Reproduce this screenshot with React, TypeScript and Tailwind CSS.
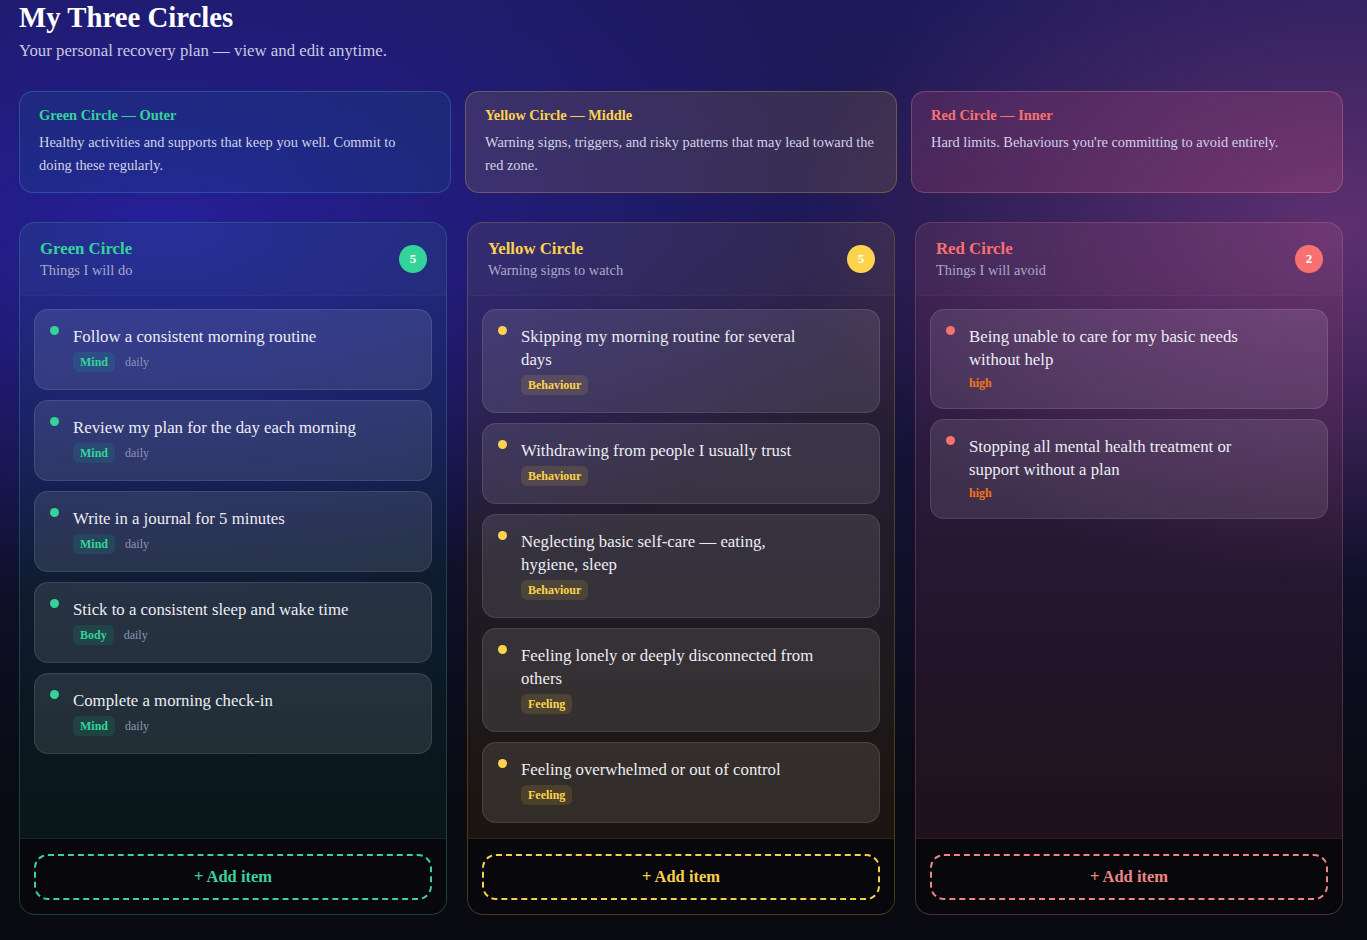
import React from 'react';

type Item = { text: string; tag?: string; freq?: string; level?: string };

type Circle = {
  key: string;
  title: string;
  subtitle: string;
  items: Item[];
  colBg: string;
  colBorder: string;
  titleColor: string;
  badgeBg: string;
  dot: string;
  tagCls: string;
  footBorder: string;
  addCls: string;
};

const circles: Circle[] = [
  {
    key: 'green',
    title: 'Green Circle',
    subtitle: 'Things I will do',
    items: [
      { text: 'Follow a consistent morning routine', tag: 'Mind', freq: 'daily' },
      { text: 'Review my plan for the day each morning', tag: 'Mind', freq: 'daily' },
      { text: 'Write in a journal for 5 minutes', tag: 'Mind', freq: 'daily' },
      { text: 'Stick to a consistent sleep and wake time', tag: 'Body', freq: 'daily' },
      { text: 'Complete a morning check-in', tag: 'Mind', freq: 'daily' },
    ],
    colBg: 'bg-emerald-400/[0.06]',
    colBorder: 'border-emerald-300/20',
    titleColor: 'text-[#34d399]',
    badgeBg: 'bg-[#34d399]',
    dot: 'bg-[#34d399]',
    tagCls: 'text-[#34d399] bg-emerald-400/[0.12]',
    footBorder: 'border-emerald-300/15',
    addCls: 'border-[#3fcf9c] text-[#3fcf9c]',
  },
  {
    key: 'yellow',
    title: 'Yellow Circle',
    subtitle: 'Warning signs to watch',
    items: [
      { text: 'Skipping my morning routine for several days', tag: 'Behaviour' },
      { text: 'Withdrawing from people I usually trust', tag: 'Behaviour' },
      { text: 'Neglecting basic self-care — eating, hygiene, sleep', tag: 'Behaviour' },
      { text: 'Feeling lonely or deeply disconnected from others', tag: 'Feeling' },
      { text: 'Feeling overwhelmed or out of control', tag: 'Feeling' },
    ],
    colBg: 'bg-amber-400/[0.07]',
    colBorder: 'border-amber-300/20',
    titleColor: 'text-[#fcd34d]',
    badgeBg: 'bg-[#fcd34d]',
    dot: 'bg-[#fcd34d]',
    tagCls: 'text-[#fcd34d] bg-amber-300/[0.12]',
    footBorder: 'border-amber-300/15',
    addCls: 'border-[#f7cf4e] text-[#f7cf4e]',
  },
  {
    key: 'red',
    title: 'Red Circle',
    subtitle: 'Things I will avoid',
    items: [
      { text: 'Being unable to care for my basic needs without help', level: 'high' },
      { text: 'Stopping all mental health treatment or support without a plan', level: 'high' },
    ],
    colBg: 'bg-rose-400/[0.09]',
    colBorder: 'border-rose-300/20',
    titleColor: 'text-[#f87171]',
    badgeBg: 'bg-[#f87171]',
    dot: 'bg-[#f87171]',
    tagCls: '',
    footBorder: 'border-rose-300/15',
    addCls: 'border-[#ee8585] text-[#ee8585]',
  },
];

const intro = [
  {
    title: 'Green Circle — Outer',
    text: 'Healthy activities and supports that keep you well. Commit to doing these regularly.',
    cls: 'bg-emerald-400/[0.07] border-sky-300/20',
    titleCls: 'text-[#34d399]',
  },
  {
    title: 'Yellow Circle — Middle',
    text: 'Warning signs, triggers, and risky patterns that may lead toward the red zone.',
    cls: 'bg-amber-300/[0.12] border-amber-300/25',
    titleCls: 'text-[#fcd34d]',
  },
  {
    title: 'Red Circle — Inner',
    text: "Hard limits. Behaviours you're committing to avoid entirely.",
    cls: 'bg-rose-400/[0.15] border-rose-300/25',
    titleCls: 'text-[#f87171]',
  },
];

function ItemCard({ item, c }: { item: Item; c: Circle }) {
  return (
    <div className="rounded-[14px] border border-white/10 bg-white/[0.1] pl-[15px] pr-4 pt-[15px] pb-[17px] flex items-start gap-[14px]">
      <span className={`mt-[1px] w-[9px] h-[9px] rounded-full shrink-0 ${c.dot}`} />
      <div className="max-w-[300px]">
        <p className="text-[16.8px] leading-[23px] text-[#ececf4]">{item.text}</p>
        <div className="mt-[4px] flex items-center gap-[10px]">
          {item.tag && (
            <span className={`rounded-md px-[7px] py-[3px] text-[12px] leading-[14px] font-bold ${c.tagCls}`}>
              {item.tag}
            </span>
          )}
          {item.freq && <span className="text-[12px] leading-[20px] text-[#9093b3]">{item.freq}</span>}
          {item.level && (
            <span className="text-[12px] leading-[16px] font-bold text-[#f97316]">{item.level}</span>
          )}
        </div>
      </div>
    </div>
  );
}

function Column({ c }: { c: Circle }) {
  return (
    <div className={`flex flex-col rounded-[16px] border overflow-hidden ${c.colBorder} ${c.colBg}`}>
      <div className="flex items-center justify-between pl-5 pr-[19px] pt-[15px] pb-[15px] bg-white/[0.025] border-b border-white/[0.03]">
        <div>
          <h2 className={`text-[16.8px] leading-[22px] font-bold ${c.titleColor}`}>{c.title}</h2>
          <p className="text-[14.4px] leading-[20px] text-[#a7a9c6]">{c.subtitle}</p>
        </div>
        <span
          className={`w-7 h-7 rounded-full flex items-center justify-center text-[13px] font-bold text-white ${c.badgeBg}`}
        >
          {c.items.length}
        </span>
      </div>
      <div className="flex-1 flex flex-col gap-[10px] px-[14px] pt-[13px] pb-[15px]">
        {c.items.map((it) => (
          <ItemCard key={it.text} item={it} c={c} />
        ))}
      </div>
      <div className={`border-t bg-[#07070c] px-[14px] pt-[15px] pb-[14px] ${c.footBorder}`}>
        <button
          className={`w-full h-[46px] rounded-[14px] border-2 border-dashed bg-transparent text-[16.5px] font-bold ${c.addCls}`}
        >
          + Add item
        </button>
      </div>
    </div>
  );
}

export default function App() {
  return (
    <div
      className="min-h-screen w-full pl-[19px] pr-[24px] pb-6 font-['Liberation_Serif',serif] bg-[#0a0a12] bg-[radial-gradient(ellipse_55%_40%_at_12%_24%,rgba(38,32,165,0.85),transparent),radial-gradient(ellipse_40%_38%_at_98%_24%,rgba(105,52,118,0.85),transparent),linear-gradient(to_bottom,#1c1a5a_0%,#1c1748_30%,#10102a_60%,#0a0a13_85%)]"
    >
      <h1 className="text-[28.8px] leading-[34px] font-bold text-white">My Three Circles</h1>
      <p className="mt-[5px] text-[16.8px] leading-[24px] text-[#c9c9e2]">
        Your personal recovery plan — view and edit anytime.
      </p>

      <div className="mt-[28px] grid grid-cols-3 gap-[14px]">
        {intro.map((i) => (
          <div key={i.title} className={`rounded-[14px] border px-[19px] pt-[14px] pb-[15px] ${i.cls}`}>
            <h3 className={`text-[14.4px] leading-[19px] font-bold ${i.titleCls}`}>{i.title}</h3>
            <p className="mt-[6px] text-[14.4px] leading-[23px] text-[#d2d2e6]">{i.text}</p>
          </div>
        ))}
      </div>

      <div className="mt-[29px] grid grid-cols-3 gap-5">
        {circles.map((c) => (
          <Column key={c.key} c={c} />
        ))}
      </div>
    </div>
  );
}
